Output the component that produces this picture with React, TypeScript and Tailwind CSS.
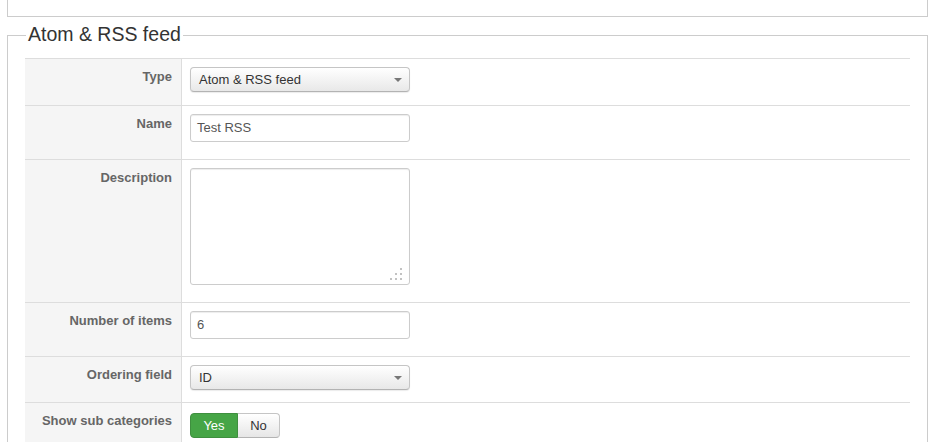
import type React from "react"

const labelCls =
  "w-[157px] shrink-0 bg-[#f5f5f5] border-r border-[#ddd] pt-[9px] pr-[9px] text-right text-[13px] leading-[18px] font-bold text-[#666]"

function Row({ label, h, pt = "pt-[8px]", children }: { label: string; h: string; pt?: string; children: React.ReactNode }) {
  return (
    <div className={`flex border-t border-[#ddd] ${h}`}>
      <div className={labelCls}>{label}</div>
      <div className={`flex-1 pl-[8px] ${pt}`}>{children}</div>
    </div>
  )
}

function Select({ value }: { value: string }) {
  return (
    <div className="flex h-[25px] w-[220px] items-center justify-between rounded-[4px] border border-[#c5c5c5] border-b-[#b3b3b3] bg-gradient-to-b from-white to-[#e8e8e8] pl-[8px] pr-[7px] text-[13px] text-[#333] shadow-[0_1px_1px_rgba(0,0,0,0.08)]">
      <span>{value}</span>
      <svg width="8" height="4" viewBox="0 0 8 4">
        <path d="M0 0h8L4 4z" fill="#777" />
      </svg>
    </div>
  )
}

function TextInput({ value }: { value: string }) {
  return (
    <div className="flex h-[28px] w-[220px] items-center rounded-[3px] border border-[#ccc] bg-white pl-[6px] text-[13px] text-[#555] shadow-[inset_0_1px_1px_rgba(0,0,0,0.075)]">
      {value}
    </div>
  )
}

export default function App() {
  return (
    <div className="min-h-[442px] bg-white pl-[7px] pr-[15px] font-['Liberation_Sans',Arial,sans-serif]">
      <div className="h-[17px] border-x border-b border-[#ccc]" />
      <fieldset className="mt-[6px] border border-[#ccc] px-[17px] pb-[20px]">
        <legend className="ml-[1px] px-[2px] pt-[1px] pb-[4px] text-[19.5px] leading-[20px] text-[#333]">Atom &amp; RSS feed</legend>
        <div className="mt-[10px]">
          <Row label="Type" h="h-[47px]">
            <Select value="Atom & RSS feed" />
          </Row>
          <Row label="Name" h="h-[54px]">
            <TextInput value="Test RSS" />
          </Row>
          <Row label="Description" h="h-[143px]">
            <div className="relative h-[117px] w-[220px] rounded-[3px] border border-[#ccc] bg-white shadow-[inset_0_1px_1px_rgba(0,0,0,0.075)]">
              {/* resize grip */}
              <svg className="absolute bottom-[4px] right-[7px]" width="12" height="12" viewBox="0 0 12 12">
                <g fill="#c2c2c2">
                  <rect x="10" y="0" width="2" height="2" />
                  <rect x="5" y="5" width="2" height="2" />
                  <rect x="10" y="5" width="2" height="2" />
                  <rect x="0" y="10" width="2" height="2" />
                  <rect x="5" y="10" width="2" height="2" />
                  <rect x="10" y="10" width="2" height="2" />
                </g>
              </svg>
            </div>
          </Row>
          <Row label="Number of items" h="h-[54px]">
            <TextInput value="6" />
          </Row>
          <Row label="Ordering field" h="h-[46px]">
            <Select value="ID" />
          </Row>
          <Row label="Show sub categories" h="h-[46px]" pt="pt-[10px]">
            <div className="flex h-[25px] text-[13px]">
              <div className="flex w-[48px] items-center justify-center rounded-l-[4px] border border-[#3f8f3f] bg-[#46a546] text-white">
                Yes
              </div>
              <div className="flex w-[42px] items-center justify-center rounded-r-[4px] border border-l-0 border-[#c5c5c5] border-b-[#b3b3b3] bg-gradient-to-b from-white to-[#e6e6e6] text-[#333]">
                No
              </div>
            </div>
          </Row>
        </div>
      </fieldset>
    </div>
  )
}
